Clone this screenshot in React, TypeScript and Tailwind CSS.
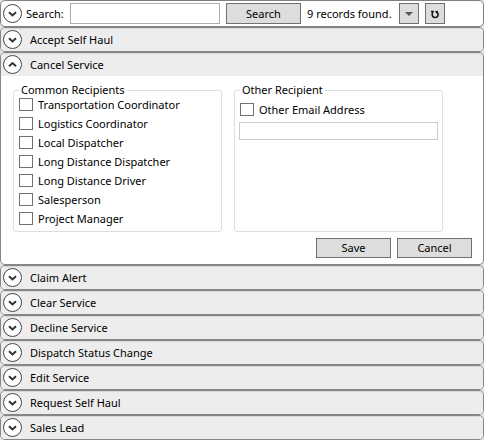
import { ReactNode } from 'react'

const recipients = [
  'Transportation Coordinator',
  'Logistics Coordinator',
  'Local Dispatcher',
  'Long Distance Dispatcher',
  'Long Distance Driver',
  'Salesperson',
  'Project Manager',
]

const services = [
  'Claim Alert',
  'Clear Service',
  'Decline Service',
  'Dispatch Status Change',
  'Edit Service',
  'Request Self Haul',
  'Sales Lead',
]

const buttonClass = 'border border-[#707070] bg-[#dddddd] text-center leading-4'

function Toggle({ open = false, label }: { open?: boolean; label: string }) {
  return (
    <button type="button" aria-expanded={open} aria-label={label} className="shrink-0">
      <svg width="19" height="19" viewBox="0 0 19 19" fill="none" className="block">
        <circle cx="9.5" cy="9.5" r="9" fill="#fff" stroke="#444" />
        <path d={open ? 'M6 11.2 9.5 8 13 11.2' : 'M6 8.2 9.5 11.4 13 8.2'} stroke="#333" strokeWidth="2" />
      </svg>
    </button>
  )
}

type PanelProps = {
  title: string
  open?: boolean
  children?: ReactNode
}

function Panel({ title, open = false, children }: PanelProps) {
  return (
    <section className="overflow-hidden rounded-[5px] border border-[#868686] bg-white">
      <div className="flex h-[23px] items-center gap-2 rounded-t-[4px] bg-[#ededed] pl-0.5 shadow-[inset_0_1px_0_#dadada]">
        <Toggle open={open} label={title} />
        <h2>{title}</h2>
      </div>
      {children}
    </section>
  )
}

function Check({ label }: { label: string }) {
  return (
    <label className="flex h-[19px] items-center gap-[5px]">
      <input type="checkbox" className="h-[13px] w-3.5 shrink-0 appearance-none border border-[#707070] bg-white" />
      {label}
    </label>
  )
}

function Group({ title, children }: { title: string; children: ReactNode }) {
  return (
    <fieldset className="w-[209px] rounded-[3px] border border-[#d5dfe5] px-1 pb-[3px]">
      <legend className="ml-px h-4 px-0.5 leading-4">{title}</legend>
      {children}
    </fieldset>
  )
}

export default function App() {
  return (
    <main className="bg-[#e3e3e3] font-['Noto_Sans','Open_Sans',sans-serif] text-[11px] leading-4 text-black">
      <form className="flex h-[27px] items-center rounded-[5px] border border-[#808080] bg-white pl-0.5">
        <Toggle label="Search options" />
        <label htmlFor="search" className="ml-1 w-11 whitespace-nowrap">
          Search:
        </label>
        <input id="search" type="text" className="h-[21px] w-[150px] border border-[#abadb3] bg-white px-1" />
        <button type="button" className={`${buttonClass} ml-1.5 h-[21px] w-[75px]`}>
          Search
        </button>
        <span className="ml-1.5 w-[92px] whitespace-nowrap">9 records found.</span>
        <button
          type="button"
          aria-label="Show records"
          className={`${buttonClass} flex h-[21px] w-5 items-center justify-center`}
        >
          <svg width="8" height="4" viewBox="0 0 8 4">
            <path d="M0 0h8L4 4z" fill="#555" />
          </svg>
        </button>
        <button
          type="button"
          aria-label="Refresh"
          className={`${buttonClass} ml-1.5 flex h-[21px] w-5 items-center justify-center`}
        >
          <svg width="10" height="10" viewBox="0 0 10 10" fill="none">
            <path
              d="M1 2.5H3.2C1.4 4.4 1.7 8.5 5 8.5 8.8 8.5 9 3.6 6 3"
              stroke="#111"
              strokeWidth="1.5"
              strokeLinejoin="round"
            />
            <path d="M4.8 2.6 7.6 1.4V4.8z" fill="#111" />
          </svg>
        </button>
      </form>

      <Panel title="Accept Self Haul" />
      <Panel title="Cancel Service" open>
        <div className="flex gap-3 px-3 pt-[6px]">
          <Group title="Common Recipients">
            <div className="-mt-[3px] pl-px">
              {recipients.map((name) => (
                <Check key={name} label={name} />
              ))}
            </div>
          </Group>
          <Group title="Other Recipient">
            <div className="pt-0.5 pl-px">
              <Check label="Other Email Address" />
            </div>
            <input
              type="text"
              aria-label="Email address"
              className="mt-[3px] block h-[18px] w-full border border-[#cccccc] bg-white px-1"
            />
          </Group>
        </div>
        <div className="flex justify-end gap-1.5 pt-1.5 pr-[11px] pb-1.5">
          <button type="button" className={`${buttonClass} h-5 w-[75px]`}>
            Save
          </button>
          <button type="button" className={`${buttonClass} h-5 w-[75px]`}>
            Cancel
          </button>
        </div>
      </Panel>
      {services.map((name) => (
        <Panel key={name} title={name} />
      ))}
    </main>
  )
}
